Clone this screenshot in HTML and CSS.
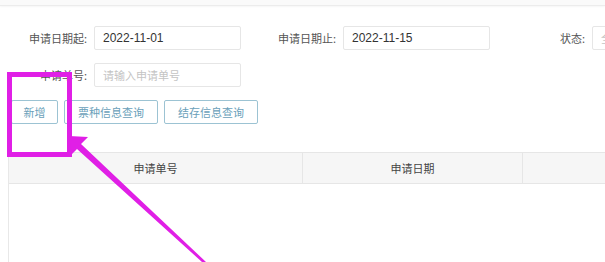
FILE: index.html
```html
<!DOCTYPE html>
<html lang="zh">
<head>
<meta charset="utf-8">
<link rel="stylesheet" href="styles.css">
</head>
<body>
<div class="page">
  <div class="topbar"></div>
  <div class="form">
    <div class="row">
      <div class="field"><span class="label">申请日期起:</span><div class="input">2022-11-01</div></div>
      <div class="field"><span class="label">申请日期止:</span><div class="input">2022-11-15</div></div>
      <div class="field"><span class="label">状态:</span><div class="input placeholder">全部</div></div>
    </div>
    <div class="row">
      <div class="field"><span class="label">申请单号:</span><div class="input placeholder">请输入申请单号</div></div>
    </div>
  </div>
  <div class="buttons">
    <button class="btn btn-add">新增</button>
    <button class="btn btn-wide">票种信息查询</button>
    <button class="btn btn-wide">结存信息查询</button>
  </div>
  <div class="table">
    <div class="thead">
      <div class="th c1">申请单号</div>
      <div class="th c2">申请日期</div>
      <div class="th c3"></div>
    </div>
    <div class="tbody"></div>
  </div>
  <svg class="annot" width="605" height="262" viewBox="0 0 605 262">
    <rect x="9.5" y="74.5" width="60" height="80" fill="none" stroke="#e01fe6" stroke-width="5"/>
    <polygon points="69,136 88,137 81,144 206,262 202,262 77,149 72,154" fill="#e01fe6"/>
  </svg>
</div>
</body>
</html>
```
FILE: styles.css
```css
html, body { margin: 0; padding: 0; background: #fff; }
body { font-family: "Noto Sans CJK SC", "Microsoft YaHei", sans-serif; color: #555; overflow: hidden; }
.page { position: relative; width: 605px; height: 262px; overflow: hidden; }
.topbar { height: 5px; background: #fafafa; border-bottom: 1px solid #ececec; box-shadow: 0 1px 2px rgba(0,0,0,0.04); }
.form { display: flex; flex-direction: column; gap: 13px; padding-top: 20px; }
.row { display: flex; gap: 8px; }
.field { display: flex; align-items: center; gap: 7px; flex-shrink: 0; }
.label { width: 87px; text-align: right; font-size: 11px; color: #555; white-space: nowrap; }
.input { width: 137px; height: 22px; border: 1px solid #e6e6e6; border-radius: 2px; padding-left: 8px; font-size: 12px; line-height: 22px; color: #333; font-family: "Liberation Sans", "Noto Sans CJK SC", sans-serif; }
.input.placeholder { color: #c4c4c4; font-size: 11px; font-family: "Noto Sans CJK SC", sans-serif; }
.buttons { display: flex; gap: 6px; padding-left: 11px; margin-top: 13px; }
.btn { height: 24px; background: #fff; border: 1px solid #9cc3d3; border-radius: 2px; color: #6a9fba; font-family: "Noto Sans CJK SC", sans-serif; font-size: 11px; padding: 0; }
.btn-add { width: 47px; }
.btn-wide { width: 94px; }
.table { margin-left: 8px; margin-top: 28px; border-left: 1px solid #e8e8e8; height: 120px; }
.thead { display: flex; height: 30px; background: #f6f6f6; border-top: 1px solid #e6e6e6; border-bottom: 1px solid #e6e6e6; }
.th { display: flex; align-items: center; justify-content: center; font-size: 11px; color: #444; flex-shrink: 0; }
.c1 { width: 293px; border-right: 1px solid #e6e6e6; }
.c2 { width: 219px; border-right: 1px solid #e6e6e6; }
.c3 { width: 200px; }
.annot { position: absolute; left: 0; top: 0; pointer-events: none; }
```
